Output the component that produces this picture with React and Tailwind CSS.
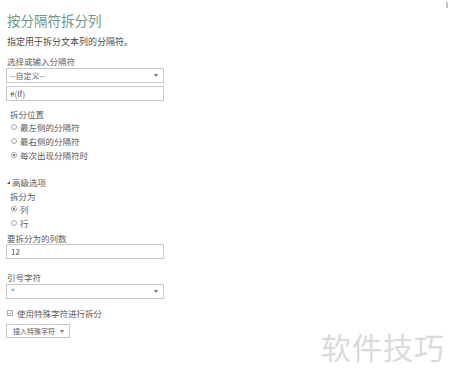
export default function App() {
  const font = { fontFamily: '"Noto Sans CJK SC", "Noto Sans", sans-serif' };
  const Radio = ({ checked, label }) => (
    <div className="flex h-[14px] items-center pl-[5px]">
      <span className="flex h-[6px] w-[6px] items-center justify-center rounded-full border border-[#a8a8a8] bg-white">
        {checked && <span className="h-[2px] w-[2px] rounded-full bg-[#555]" />}
      </span>
      <span className="ml-[3px] whitespace-nowrap text-[8.5px] leading-[12px] text-[#5a5a5a]">{label}</span>
    </div>
  );
  const Caret = () => (
    <svg width="4" height="3" viewBox="0 0 4 3" className="mr-[5px]">
      <path d="M0 0 L4 0 L2 3 Z" fill="#777" />
    </svg>
  );
  return (
    <div className="relative h-[378px] w-[450px] overflow-hidden bg-white" style={font}>
      <div className="flex flex-col pl-[6px]">
        <div className="mt-[10px] h-[20px] pl-[1px] text-[13.5px] leading-[20px] text-[#6f9788]">按分隔符拆分列</div>
        <div className="mt-[6px] h-[12px] pl-[1px] whitespace-nowrap text-[9px] leading-[12px] text-[#4a4a4a]">指定用于拆分文本列的分隔符。</div>
        <div className="mt-[7px] h-[12px] pl-[1px] text-[8.5px] leading-[12px] text-[#5a5a5a]">选择或输入分隔符</div>
        <div className="mt-[1px] flex h-[15px] w-[158px] items-center justify-between border border-[#c8c8c8] bg-white">
          <span className="pl-[3px] text-[8px] leading-[12px] text-[#666]">--自定义--</span>
          <Caret />
        </div>
        <div className="mt-[3px] flex h-[15px] w-[158px] items-center border border-[#c8c8c8] bg-white">
          <span className="pl-[3px] text-[8px] leading-[12px] text-[#555]">#(lf)</span>
        </div>
        <div className="mt-[8px] h-[11px] pl-[4px] text-[8.5px] leading-[11px] text-[#5a5a5a]">拆分位置</div>
        <Radio label="最左侧的分隔符" />
        <Radio label="最右侧的分隔符" />
        <Radio checked label="每次出现分隔符时" />
        <div className="mt-[14px] flex h-[12px] items-center pl-[1px]">
          <svg width="3" height="3" viewBox="0 0 3 3" className="mr-[2px]">
            <path d="M0 3 L3 3 L3 0 Z" fill="#555" />
          </svg>
          <span className="text-[8.5px] leading-[12px] text-[#5a5a5a]">高级选项</span>
        </div>
        <div className="mt-[2px] h-[12px] pl-[4px] text-[8.5px] leading-[12px] text-[#5a5a5a]">拆分为</div>
        <Radio checked label="列" />
        <Radio label="行" />
        <div className="mt-[2px] h-[12px] pl-[1px] text-[8.5px] leading-[12px] text-[#5a5a5a]">要拆分为的列数</div>
        <div className="flex h-[15px] w-[158px] items-center border border-[#c8c8c8] bg-white">
          <span className="pl-[4px] text-[8px] leading-[12px] text-[#555]">12</span>
        </div>
        <div className="mt-[12px] h-[12px] pl-[1px] text-[8.5px] leading-[12px] text-[#5a5a5a]">引号字符</div>
        <div className="mt-[1px] flex h-[15px] w-[158px] items-center justify-between border border-[#c8c8c8] bg-white">
          <span className="pl-[4px] text-[8px] leading-[12px] text-[#555]">"</span>
          <Caret />
        </div>
        <div className="mt-[7px] flex h-[14px] items-center pl-[1px]">
          <span className="flex h-[6px] w-[6px] items-center justify-center border border-[#b0b0b0] bg-white">
            <svg width="6" height="6" viewBox="0 0 6 6">
              <path d="M0.8 3 L2.4 4.6 L5.4 1" stroke="#666" strokeWidth="0.9" fill="none" />
            </svg>
          </span>
          <span className="ml-[4px] whitespace-nowrap text-[8.5px] leading-[12px] text-[#5a5a5a]">使用特殊字符进行拆分</span>
        </div>
        <div className="mt-[4px] flex h-[14px] w-[64px] items-center justify-between border border-[#c8c8c8] bg-white">
          <span className="pl-[6px] whitespace-nowrap text-[7px] leading-[10px] text-[#555]">插入特殊字符</span>
          <Caret />
        </div>
      </div>
      <div className="absolute right-[2px] top-[2px] h-[6px] w-[2px] bg-[#c4c4c4]" />
      <div className="absolute left-[321px] top-[326px] whitespace-nowrap text-[30px] leading-[40px] tracking-[1px] text-[#dadada]">软件技巧</div>
    </div>
  );
}
